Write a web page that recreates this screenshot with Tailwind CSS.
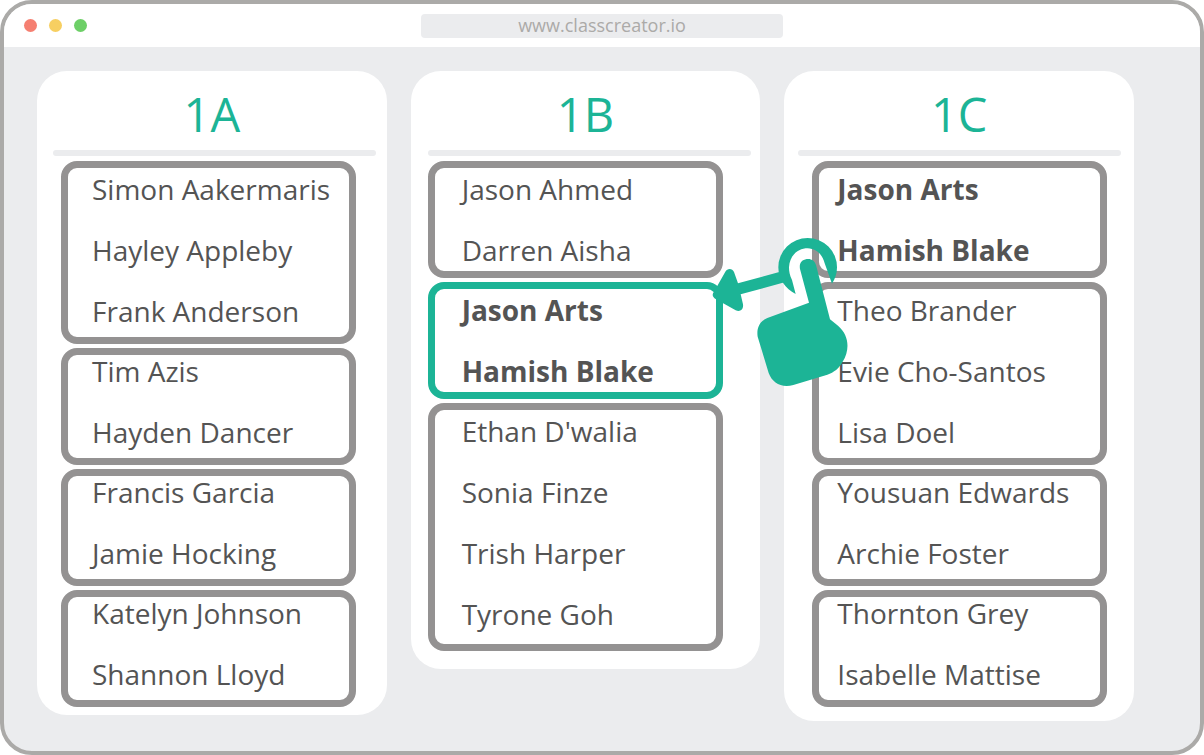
<!DOCTYPE html>
<html lang="en">
<head>
  <meta charset="UTF-8" />
  <meta name="viewport" content="width=device-width, initial-scale=1.0" />
  <title>Class Creator</title>
  <script src="https://cdn.jsdelivr.net/npm/@tailwindcss/browser@4"></script>
</head>
<body class="bg-white font-['Open_Sans',sans-serif] text-[#545454]">

<!-- Browser window -->
<div class="min-h-screen flex flex-col bg-[#ebecee] border-4 border-[#abaaa8] rounded-[32px] overflow-hidden">

  <!-- Title bar -->
  <header class="relative flex items-center justify-center h-[43px] bg-white">
    <div class="absolute left-5 flex gap-3">
      <span class="size-[13px] rounded-full bg-[#f57f71]"></span>
      <span class="size-[13px] rounded-full bg-[#f7cf61]"></span>
      <span class="size-[13px] rounded-full bg-[#6dcf67]"></span>
    </div>
    <input type="text" aria-label="Address" value="www.classcreator.io" class="w-[362px] h-6 pb-0.5 rounded bg-[#ebecee] text-center text-lg text-[#abaaa8]" />
  </header>

  <!-- Classes -->
  <main class="grid grid-cols-3 items-start gap-6 pt-6 pl-[33px] pr-[66px] pb-[30px] text-[28px] leading-8">

    <section class="bg-white rounded-[30px] pb-2">
      <h2 class="pt-2 text-center text-[47px] leading-[71px] text-[#1cb496]">1A</h2>
      <hr class="h-[6px] ml-4 mr-[11px] border-0 rounded-full bg-[#ebecee]" />
      <div class="flex flex-col gap-1 mt-[5px] ml-6 mr-[31px]">
        <ul class="flex flex-col gap-[29px] border-7 border-[#949292] rounded-2xl pl-6 pt-[5px] pb-[10px]">
          <li>Simon Aakermaris</li>
          <li>Hayley Appleby</li>
          <li>Frank Anderson</li>
        </ul>
        <ul class="flex flex-col gap-[29px] border-7 border-[#949292] rounded-2xl pl-6 pb-[10px]">
          <li>Tim Azis</li>
          <li>Hayden Dancer</li>
        </ul>
        <ul class="flex flex-col gap-[29px] border-7 border-[#949292] rounded-2xl pl-6 pb-[10px]">
          <li>Francis Garcia</li>
          <li>Jamie Hocking</li>
        </ul>
        <ul class="flex flex-col gap-[29px] border-7 border-[#949292] rounded-2xl pl-6 pb-[10px]">
          <li>Katelyn Johnson</li>
          <li>Shannon Lloyd</li>
        </ul>
      </div>
    </section>

    <section class="bg-white rounded-[30px] pb-[18px]">
      <h2 class="pt-2 text-center text-[47px] leading-[71px] text-[#1cb496]">1B</h2>
      <hr class="h-[6px] ml-[17px] mr-[9px] border-0 rounded-full bg-[#ebecee]" />
      <div class="flex flex-col gap-1 mt-[5px] ml-[17px] mr-[37px]">
        <ul class="flex flex-col gap-[29px] border-7 border-[#949292] rounded-2xl pl-[27px] py-[5px]">
          <li>Jason Ahmed</li>
          <li>Darren Aisha</li>
        </ul>
        <ul class="flex flex-col gap-[29px] border-7 border-[#1cb496] rounded-2xl pl-[27px] py-[5px] font-bold">
          <li>Jason Arts</li>
          <li>Hamish Blake</li>
        </ul>
        <ul class="flex flex-col gap-[29px] border-7 border-[#949292] rounded-2xl pl-[27px] pt-[5px] pb-[14px]">
          <li>Ethan D'walia</li>
          <li>Sonia Finze</li>
          <li>Trish Harper</li>
          <li>Tyrone Goh</li>
        </ul>
      </div>
    </section>

    <section class="relative bg-white rounded-[30px] pb-[14px]">
      <h2 class="pt-2 text-center text-[47px] leading-[71px] text-[#1cb496]">1C</h2>
      <hr class="h-[6px] ml-[14px] mr-[13px] border-0 rounded-full bg-[#ebecee]" />
      <div class="flex flex-col gap-1 mt-[5px] ml-7 mr-[27px]">
        <ul class="flex flex-col gap-[29px] border-7 border-[#949292] rounded-2xl pl-[18px] py-[5px] font-bold">
          <li>Jason Arts</li>
          <li>Hamish Blake</li>
        </ul>
        <ul class="flex flex-col gap-[29px] border-7 border-[#949292] rounded-2xl pl-[18px] pt-[5px] pb-[10px]">
          <li>Theo Brander</li>
          <li>Evie Cho-Santos</li>
          <li>Lisa Doel</li>
        </ul>
        <ul class="flex flex-col gap-[29px] border-7 border-[#949292] rounded-2xl pl-[18px] pb-[10px]">
          <li>Yousuan Edwards</li>
          <li>Archie Foster</li>
        </ul>
        <ul class="flex flex-col gap-[29px] border-7 border-[#949292] rounded-2xl pl-[18px] pb-[10px]">
          <li>Thornton Grey</li>
          <li>Isabelle Mattise</li>
        </ul>
      </div>

      <!-- Drag hand, moving the pair over to 1B -->
      <svg class="absolute -left-[74px] top-[164px] w-[140px] h-[155px]" viewBox="60 30 420 465" fill="#1cb496" aria-hidden="true">
        <path d="M106 140C112 129 127 129 132 141L144 175L276 139L284 172L152 208L159 238C161 253 151 262 137 256L78 223C66 216 66 207 72 200Z" />
        <path d="M426 176C436 161 441 145 441 127A88 88 0 1 0 265 127C265 161 286 192 317 207L306 165C299 151 297 139 297 127C299 90 325 70 353 70C380 71 398 90 404 115Z" />
        <path d="M357 233L330 132C327 114 335 105 350 102C364 100 374 107 378 120L420 283L444 302C478 331 480 375 458 410C447 430 432 442 412 449L310 480C275 490 247 474 236 444L203 335C199 310 209 289 232 279Z" />
      </svg>
    </section>

  </main>
</div>

</body>
</html>
